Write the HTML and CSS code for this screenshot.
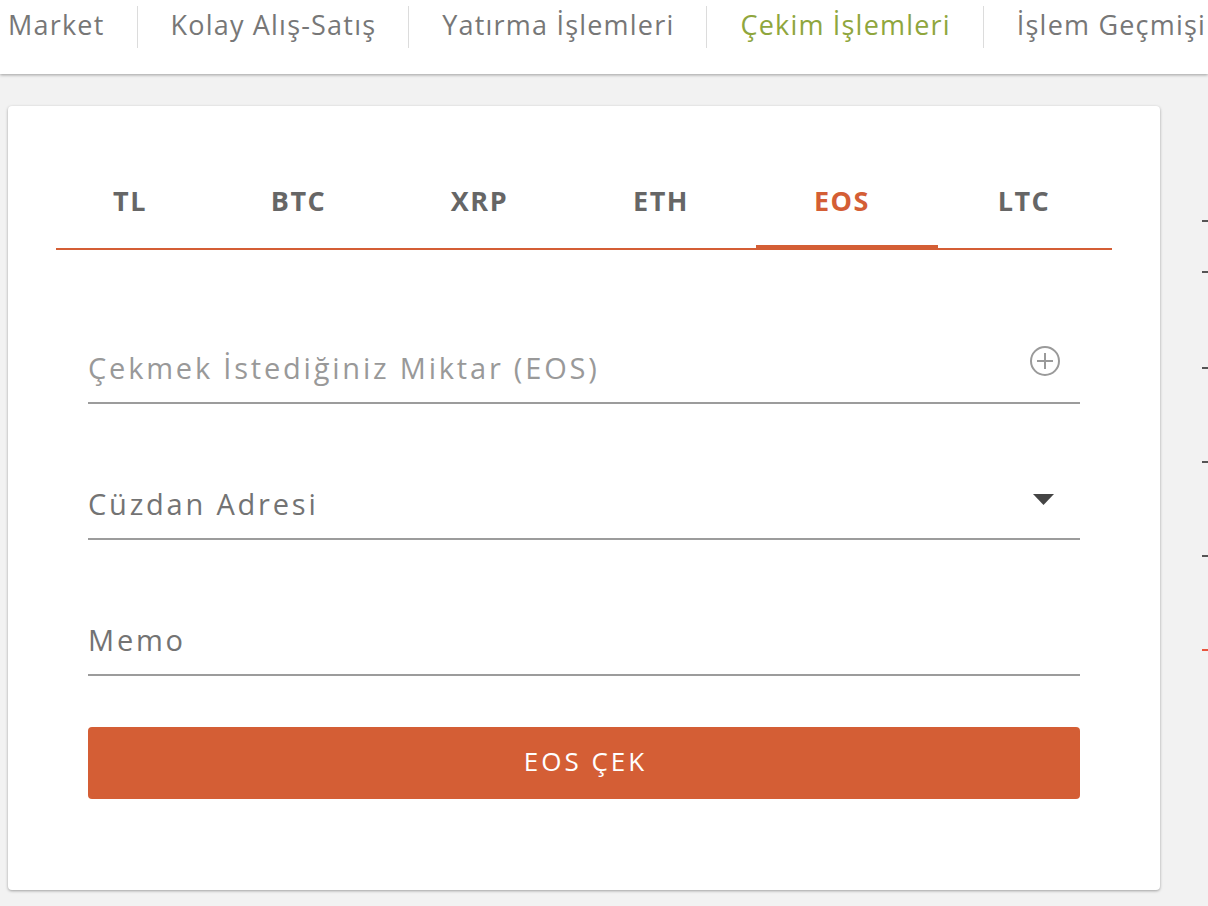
FILE: index.html
```html
<!DOCTYPE html>
<html lang="tr">
<head>
<meta charset="utf-8">
<title>Çekim İşlemleri</title>
<link rel="stylesheet" href="styles.css">
</head>
<body>
<nav class="topnav">
  <a class="nav-item first">Market</a>
  <a class="nav-item">Kolay Alış-Satış</a>
  <a class="nav-item">Yatırma İşlemleri</a>
  <a class="nav-item active">Çekim İşlemleri</a>
  <a class="nav-item">İşlem Geçmişi</a>
</nav>
<main class="layout">
  <section class="card">
    <div class="tabs">
      <div class="tab t1">TL</div>
      <div class="tab t2">BTC</div>
      <div class="tab t3">XRP</div>
      <div class="tab t4">ETH</div>
      <div class="tab t5 active">EOS</div>
      <div class="tab t6">LTC</div>
    </div>
    <form class="form">
      <div class="field">
        <span class="placeholder">Çekmek İstediğiniz Miktar (EOS)</span>
        <svg class="icon-plus" width="32" height="32" viewBox="0 0 32 32"><circle cx="16" cy="16" r="14" fill="none" stroke="#9a9a9a" stroke-width="2"/><path d="M16 8v16M8 16h16" stroke="#9a9a9a" stroke-width="2"/></svg>
      </div>
      <div class="field">
        <span class="label">Cüzdan Adresi</span>
        <svg class="icon-caret" width="21" height="11" viewBox="0 0 21 11"><path d="M0 0h21L10.5 11z" fill="#444"/></svg>
      </div>
      <div class="field">
        <span class="label">Memo</span>
      </div>
      <button type="button" class="submit">EOS ÇEK</button>
    </form>
  </section>
  <aside class="side">
    <span class="dash d1"></span>
    <span class="dash d2"></span>
    <span class="dash d3"></span>
    <span class="dash d4"></span>
    <span class="dash d5"></span>
    <span class="dash d6 red"></span>
  </aside>
</main>
</body>
</html>
```
FILE: styles.css
```css
* { box-sizing: border-box; }
html, body { margin: 0; padding: 0; }
body {
  background: #f2f2f2;
  font-family: "Open Sans", "Noto Sans", sans-serif;
  width: 1208px;
  height: 906px;
  overflow: hidden;
}
.topnav {
  height: 74px;
  background: #fff;
  box-shadow: 0 1px 3px rgba(0,0,0,0.35);
  display: flex;
  align-items: flex-start;
  padding-top: 6px;
  position: relative;
  z-index: 1;
  white-space: nowrap;
  overflow: hidden;
}
.nav-item {
  height: 42px;
  line-height: 38px;
  font-size: 27px;
  color: #777;
  letter-spacing: 1.2px;
  padding: 0 32px 0 33px;
  border-left: 1px solid #dcdcdc;
  flex: none;
}
.nav-item.first { border-left: none; padding-left: 8px; }
.nav-item.active { color: #8fa63d; }

.layout {
  display: flex;
  align-items: flex-start;
  padding: 32px 0 0 8px;
}
.card {
  width: 1152px;
  height: 784px;
  background: #fff;
  border-radius: 4px;
  box-shadow: 0 1px 3px rgba(0,0,0,0.35);
  padding: 48px 48px 0;
  flex: none;
}
.tabs {
  display: grid;
  grid-template-columns: 152px 181px 181px 186px 182px 174px;
  height: 96px;
  border-bottom: 2px solid #d45e35;
}
.tab {
  display: flex;
  align-items: center;
  justify-content: center;
  font-size: 27px;
  font-weight: 700;
  color: #666;
  letter-spacing: 1.5px;
  padding-bottom: 2px;
}
.tab.t1 { justify-content: flex-start; padding-left: 57px; }
.tab.t4 { padding-right: 4px; }
.tab.t5 { padding-right: 10px; }
.tab.t6 { padding-right: 2px; }
.tab.active {
  color: #d45e35;
  box-shadow: inset 0 -3px 0 #d45e35;
}
.form {
  padding: 82px 32px 0;
}
.field {
  height: 72px;
  border-bottom: 2px solid #9c9c9c;
  display: flex;
  align-items: center;
  justify-content: space-between;
  font-size: 29px;
  letter-spacing: 2.8px;
  margin-bottom: 64px;
  padding: 0 18px 0 0;
}
.field:nth-of-type(3) { margin-bottom: 51px; }
.placeholder { color: #999; }
.label { color: #737373; }
.icon-plus { margin-top: -12px; margin-right: 1px; }
.icon-caret { margin-top: -8px; margin-right: 8px; }
.submit {
  display: block;
  width: 100%;
  height: 72px;
  border: none;
  border-radius: 4px;
  background: #d45e35;
  color: #fff;
  font-family: "Open Sans", "Noto Sans", sans-serif;
  font-size: 26px;
  letter-spacing: 3px;
  padding: 0 0 5px 3px;
}
.side {
  display: flex;
  flex-direction: column;
  margin-left: 42px;
  padding-top: 114px;
}
.dash {
  display: block;
  width: 8px;
  height: 2px;
  background: #555;
}
.d2 { margin-top: 49px; }
.d3 { margin-top: 94px; }
.d4 { margin-top: 92px; }
.d5 { margin-top: 92px; }
.d6 { margin-top: 92px; }
.dash.red { background: #e8553d; }
```
